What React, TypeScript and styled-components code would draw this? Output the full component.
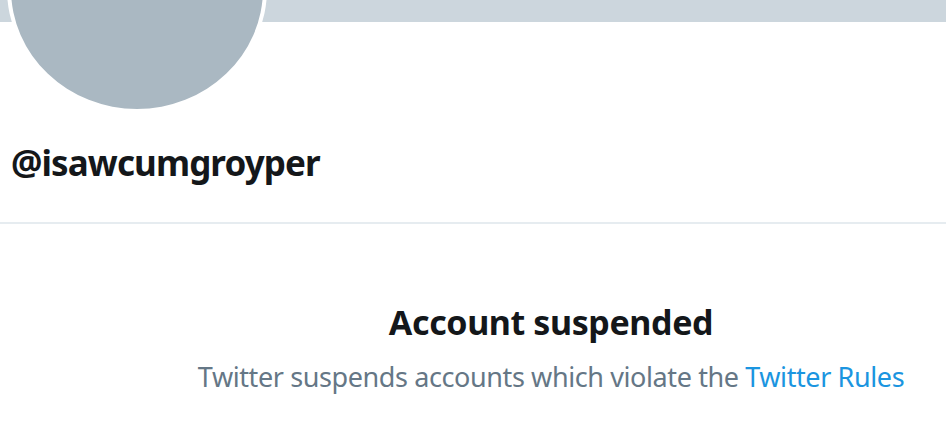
import styled, { createGlobalStyle } from 'styled-components';

const GlobalStyle = createGlobalStyle`
  html, body {
    margin: 0;
    padding: 0;
    background: #ffffff;
  }
  body {
    font-family: "Noto Sans", "Open Sans", sans-serif;
    color: #14171a;
    overflow: hidden;
  }
`;

const Page = styled.div`
  width: 946px;
  height: 422px;
  overflow: hidden;
  background: #ffffff;
`;

const Banner = styled.div`
  height: 22px;
  background: #ccd6dd;
`;

const ProfileHeader = styled.div`
  display: flex;
  flex-direction: column;
  align-items: flex-start;
  padding: 0 0 0 11px;
  height: 200px;
  border-bottom: 2px solid #e6ecf0;
`;

const Avatar = styled.div`
  width: 252px;
  height: 240px;
  margin: -157px 0 0 -4px;
  border: 4px solid #ffffff;
  border-radius: 50%;
  background: #aab8c2;
  flex-shrink: 0;
`;

const Handle = styled.h1`
  margin: 30px 0 0;
  font-size: 35px;
  font-weight: 700;
  line-height: 40px;
  letter-spacing: -0.9px;
  color: #14171a;
`;

const Notice = styled.div`
  display: flex;
  flex-direction: column;
  align-items: center;
  padding: 76px 0 0 156px;
`;

const Title = styled.h2`
  margin: 0;
  font-size: 34px;
  font-weight: 700;
  line-height: 44px;
  letter-spacing: -0.4px;
  color: #14171a;
`;

const Message = styled.p`
  margin: 16px 0 0;
  font-size: 27px;
  line-height: 34px;
  letter-spacing: -0.4px;
  color: #657786;
`;

const RulesLink = styled.a`
  color: #1b95e0;
  text-decoration: none;
`;

export default function App() {
  return (
    <Page>
      <GlobalStyle />
      <Banner />
      <ProfileHeader>
        <Avatar />
        <Handle>@isawcumgroyper</Handle>
      </ProfileHeader>
      <Notice>
        <Title>Account suspended</Title>
        <Message>
          Twitter suspends accounts which violate the{' '}
          <RulesLink href="#">Twitter Rules</RulesLink>
        </Message>
      </Notice>
    </Page>
  );
}
